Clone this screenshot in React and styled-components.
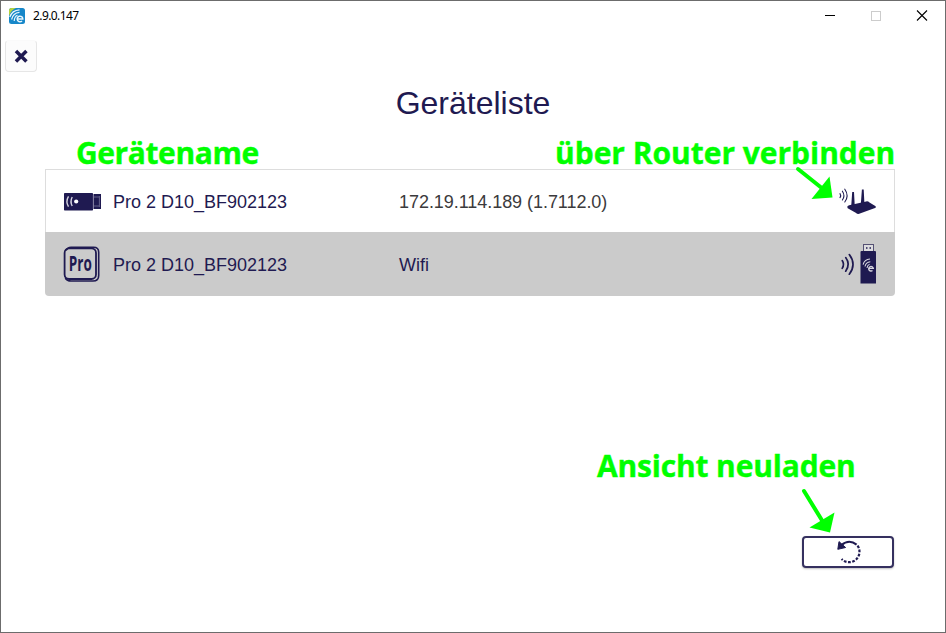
import React from "react";
import styled, { createGlobalStyle } from "styled-components";

const NAVY = "#1f1a51";
const GREEN = "#00ff00";

const GlobalStyle = createGlobalStyle`
  *, *::before, *::after { box-sizing: border-box; }
  body { margin: 0; background: #fff; }
`;

const Window = styled.div`
  position: relative;
  display: flex;
  flex-direction: column;
  width: 946px;
  height: 633px;
  overflow: hidden;
  background: #fff;
  border: 1px solid #6c6c6c;
  color: ${NAVY};
  font-family: "Liberation Sans", Arial, sans-serif;
`;

const TitleBar = styled.header`
  display: flex;
  align-items: center;
  height: 29px;
  padding-left: 8px;
`;

const AppIcon = styled.svg`
  width: 16px;
  height: 16px;
  display: block;
`;

const Version = styled.span`
  flex: 1;
  margin-left: 8px;
  font: 12px/16px "Noto Sans", sans-serif;
  letter-spacing: -0.6px;
  color: #000;
`;

const Caption = styled.span`
  display: grid;
  place-items: center;
  width: 46px;
  height: 29px;
  color: ${(p) => (p.$disabled ? "#ccc" : "#000")};
  svg { display: block; }
`;

const CloseButton = styled.button`
  display: grid;
  place-items: center;
  width: 32px;
  height: 32px;
  margin: 10px 0 0 4px;
  padding: 0;
  background: #fcfcfc;
  border: 1px solid #e6e6e6;
  border-top-color: #fafafa;
  border-radius: 4px;
  svg { display: block; }
`;

const Heading = styled.h1`
  margin: 13px 0 0;
  font-size: 32px;
  font-weight: 400;
  line-height: 36px;
  text-align: center;
`;

const List = styled.ul`
  margin: 48px 50px 0 44px;
  padding: 0;
  list-style: none;
`;

const Row = styled.li`
  display: grid;
  grid-template-columns: 50px 286px 1fr 40px;
  align-items: center;
  height: ${(p) => (p.$selected ? 64 : 63)}px;
  padding: ${(p) => (p.$selected ? "0 17.5px 0 18px" : "0 16px 0 17px")};
  font-size: 18px;
  line-height: 22px;
  background: ${(p) => (p.$selected ? "#cbcbcb" : "#fff")};
  border: ${(p) => (p.$selected ? "0" : "1px solid #ddd")};
  border-bottom: 0;
  border-radius: ${(p) => (p.$selected ? "0 0 4px 4px" : "0")};
  svg { display: block; overflow: visible; }
`;

const DeviceName = styled.span`
  padding-top: 2px;
  white-space: nowrap;
`;

const Address = styled.span`
  padding-top: 2px;
  letter-spacing: ${(p) => (p.$muted ? "-0.05px" : "0")};
  color: ${(p) => (p.$muted ? "#3b3a3c" : NAVY)};
`;

const Footer = styled.footer`
  display: flex;
  justify-content: flex-end;
  margin: auto 51px 64px 0;
`;

const ReloadButton = styled.button`
  display: grid;
  place-items: center;
  width: 92px;
  height: 32px;
  padding: 0 0 0 2px;
  background: #fff;
  border: 2px solid #35305f;
  border-radius: 4px;
  box-shadow: 0 1px 2px rgba(0, 0, 0, 0.25);
  svg { display: block; }
`;

const Note = styled.span`
  position: absolute;
  left: ${(p) => p.$x}px;
  top: ${(p) => p.$y}px;
  font: 700 30px/40px "Open Sans", "Noto Sans", sans-serif;
  letter-spacing: ${(p) => p.$track || 0}px;
  white-space: nowrap;
  color: ${GREEN};
  -webkit-text-stroke: 0.4px ${GREEN};
`;

const Arrows = styled.svg`
  position: absolute;
  left: -1px;
  top: -1px;
  pointer-events: none;
`;

const LogoMark = () => (
  <AppIcon viewBox="0 0 16 16">
    <rect width="16" height="16" rx="2.5" fill="#1687c9" />
    <path d="M0 8V2.5A2.5 2.5 0 0 1 2.5 0H7Q2 2 0 8Z" fill="#b6d33c" />
    <g fill="none" stroke="#e9f6fd" strokeWidth="1.2">
      <path d="M.8 9Q3 2.2 10.5 1.8" />
      <path d="M2.6 11.5Q4 5 10.5 4.4" />
      <path d="M5.2 13Q5.5 8.2 8.5 7.2" />
      <path d="M8.8 10.9H13.8A2.8 2.8 0 1 0 13 12.9" strokeWidth="1.5" />
    </g>
  </AppIcon>
);

const DongleIcon = () => (
  <svg width="40" height="20" viewBox="0 0 40 20">
    <rect x="1" y="2" width="29" height="17.5" rx=".7" fill={NAVY} />
    <rect x="30.5" y="3" width="7.5" height="15" fill={NAVY} />
    <path d="M31 6H36M31 15H36M36.4 5V16M30.3 4V18" stroke="#77739a" strokeWidth=".8" />
    <circle cx="13.2" cy="10.5" r="2.1" fill="#fff" />
    <g fill="none" stroke="#d5d4e0" strokeWidth="1.4">
      <path d="M9.2 6Q6.8 10.5 9.2 15" />
      <path d="M5.5 5.3Q2.4 10.5 5.5 15.7" />
    </g>
  </svg>
);

const ProLabel = styled.text`
  font: 700 20.5px/1 "Open Sans", sans-serif;
  fill: ${NAVY};
`;

const ProIcon = () => (
  <svg width="38" height="38" viewBox="0 0 38 38">
    <g fill="none" stroke={NAVY}>
      <rect x="1.6" y="3.4" width="31.4" height="30.6" rx="4.5" strokeWidth="1.8" />
      <path d="M3 5.5Q4.5 2.2 8 2.2H30.5Q35.7 2.2 35.7 7.2V30.5Q35.7 36 30 36H8Q4 36 2.3 33" strokeWidth="1.6" />
    </g>
    <ProLabel x="5.8" y="26.3" textLength="23" lengthAdjust="spacingAndGlyphs">Pro</ProLabel>
  </svg>
);

const RouterIcon = () => (
  <svg width="40" height="28" viewBox="0 0 40 28">
    <g fill="none" stroke={NAVY} strokeLinecap="round" strokeWidth="1.1">
      <path d="M2 6.6Q3.4 8.6 2 10.6" />
      <path d="M4.4 4.2Q7.4 8.6 4.4 13" />
      <path d="M6.8 2.2Q11.4 8.6 6.8 15" />
    </g>
    <path d="M14.2 5H16L16.7 18H13.3ZM23.9 2.5H25.7L26.4 16H22.9Z" fill={NAVY} />
    <path d="M11.2 18.2L28.2 14.4Q30 14 31.5 15.4L37.7 19.3V20.8L21.2 26.8Q19.5 27.3 17.7 25.7L9.7 21.2Q8.5 18.8 11.2 18.2Z" fill={NAVY} />
  </svg>
);

const WifiStickIcon = () => (
  <svg width="40" height="42" viewBox="0 0 40 42">
    <g fill="none" stroke={NAVY} strokeLinecap="round" strokeWidth="1.7">
      <path d="M4.2 17.6Q6.8 21.4 4.2 25.4" />
      <path d="M7.7 14.6Q12.7 21.4 7.7 28.2" />
      <path d="M11.3 11.6Q18.7 21.4 11.3 31.2" />
    </g>
    <rect x="25.5" y="1.5" width="10" height="7.5" fill="#dddddf" stroke="#555174" />
    <path d="M28 5H29.5M31.5 5H33" stroke={NAVY} strokeWidth="1.3" />
    <path d="M22.5 9Q22.5 8 23.5 8H37Q38 8 38 9V40.5H22.5Z" fill={NAVY} />
    <g fill="none" stroke="#d7d6e0" strokeWidth="1.1">
      <path d="M25.1 21.7Q26.4 16.4 32 16" />
      <path d="M27 23.5Q28 19 32.3 18.7" />
      <path d="M29 25Q29.5 21.9 31.6 21.3" />
      <path d="M31 25.4H35.3A2.3 2.3 0 1 0 34.5 27.5" strokeWidth="1.4" />
    </g>
  </svg>
);

const ReloadIcon = () => (
  <svg width="26" height="26" viewBox="0 0 26 26">
    <path d="M5.3 6.2Q13 -.4 20.6 5.6" fill="none" stroke={NAVY} strokeWidth="2.1" />
    <path d="M20.6 5.6A10.3 10.3 0 0 1 5.6 20" fill="none" stroke={NAVY} strokeWidth="2.2" strokeDasharray="2.7 1.5" strokeDashoffset="-1.5" />
    <path d="M3 2.6L1.8 10.3L9.6 8.5Z" fill={NAVY} stroke={NAVY} strokeLinejoin="round" />
  </svg>
);

const devices = [
  { name: "Pro 2 D10_BF902123", address: "172.19.114.189 (1.7112.0)", icon: <DongleIcon />, link: <RouterIcon /> },
  { name: "Pro 2 D10_BF902123", address: "Wifi", icon: <ProIcon />, link: <WifiStickIcon />, selected: true },
];

export default function App() {
  return (
    <>
      <GlobalStyle />
      <Window>
        <TitleBar>
          <LogoMark />
          <Version>2.9.0.147</Version>
          <Caption>
            <svg width="12" height="10"><path d="M1 4.5H11" stroke="currentColor" /></svg>
          </Caption>
          <Caption $disabled>
            <svg width="10" height="10"><rect x=".5" y=".5" width="9" height="9" fill="none" stroke="currentColor" /></svg>
          </Caption>
          <Caption>
            <svg width="12" height="12"><path d="M1 .5L11 10.5M11 .5L1 10.5" stroke="currentColor" strokeWidth="1.1" /></svg>
          </Caption>
        </TitleBar>
        <CloseButton aria-label="Schließen">
          <svg width="14" height="14" viewBox="0 0 14 14">
            <path d="M3.2 3.2L11.2 11.2M11.2 3.2L3.2 11.2" stroke={NAVY} strokeWidth="3.5" strokeLinecap="square" strokeLinejoin="round" />
          </svg>
        </CloseButton>
        <Heading>Geräteliste</Heading>
        <List>
          {devices.map((d) => (
            <Row key={d.address} $selected={d.selected}>
              {d.icon}
              <DeviceName>{d.name}</DeviceName>
              <Address $muted={!d.selected}>{d.address}</Address>
              {d.link}
            </Row>
          ))}
        </List>
        <Footer>
          <ReloadButton aria-label="Neu laden"><ReloadIcon /></ReloadButton>
        </Footer>
        <Note $x={75} $y={132} $track={-0.42}>Gerätename</Note>
        <Note $x={554} $y={132} $track={-0.03}>über Router verbinden</Note>
        <Note $x={596} $y={445} $track={-0.17}>Ansicht neuladen</Note>
        <Arrows width="946" height="633">
          <g stroke={GREEN} strokeWidth="4" strokeLinecap="round" fill={GREEN}>
            <path d="M798 169L823 189" />
            <path d="M804 491L823 522" />
          </g>
          <path d="M829.5 176.5L832.5 197.5L811.5 199Z" fill={GREEN} />
          <path d="M834.5 512.5L830 532.5L809.5 527.5Z" fill={GREEN} />
        </Arrows>
      </Window>
    </>
  );
}
